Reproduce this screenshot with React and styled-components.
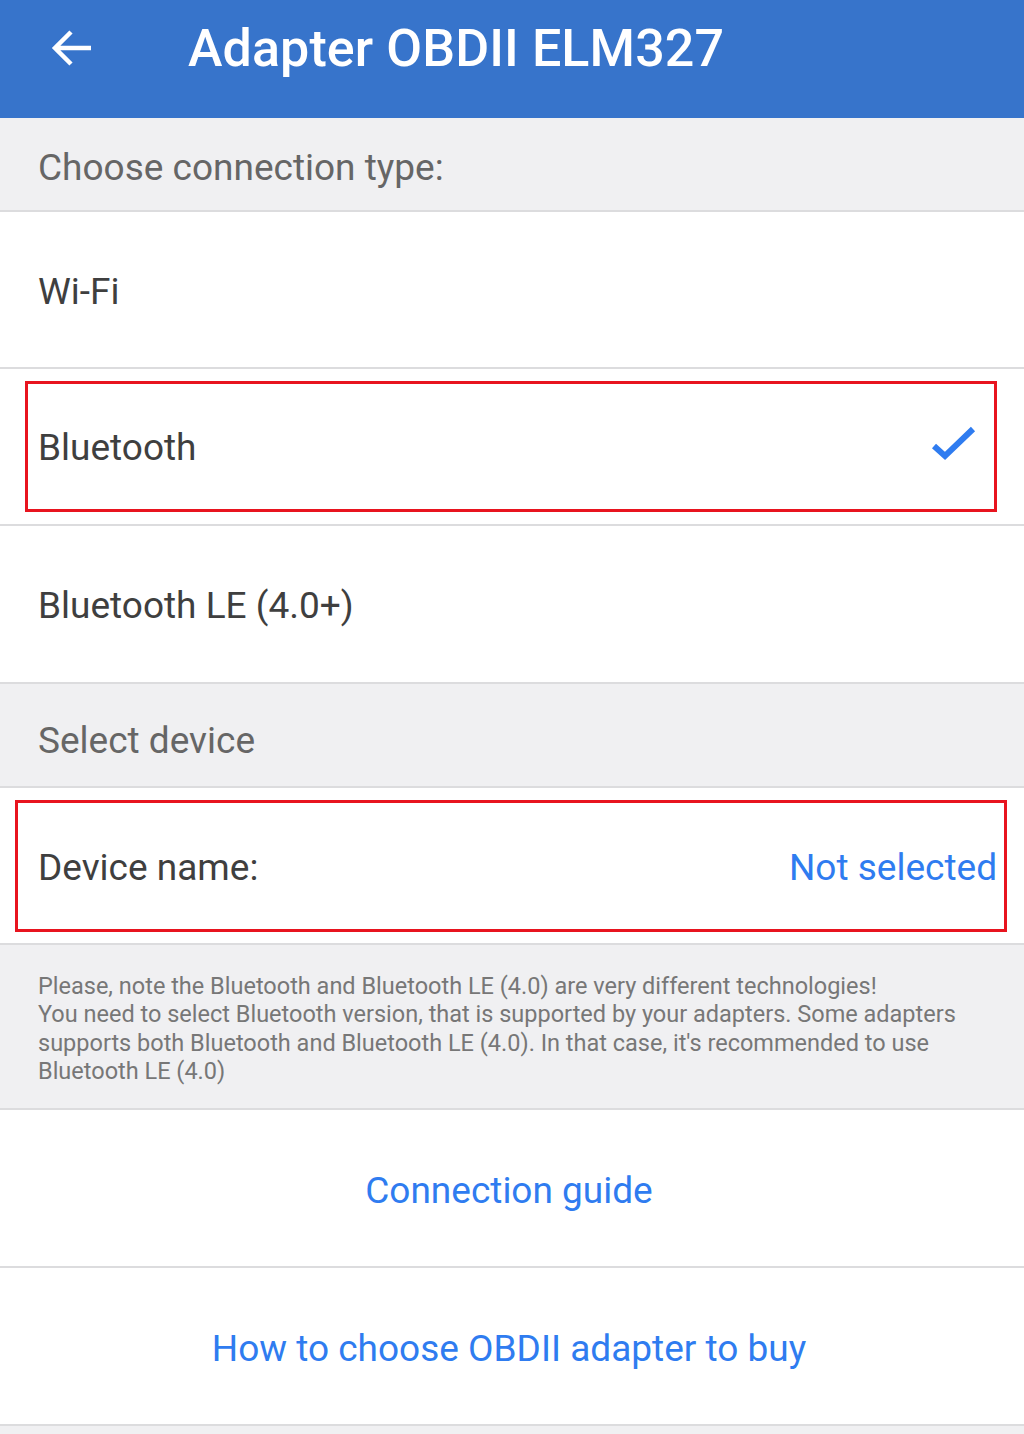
import React from "react";
import styled, { createGlobalStyle } from "styled-components";

const Global = createGlobalStyle`
  html, body { margin: 0; padding: 0; background: #f0f0f2; }
  body { font-family: Roboto, "Noto Sans", "Liberation Sans", sans-serif; }
  * { box-sizing: border-box; }
`;

const Page = styled.div`
  width: 1024px;
  min-height: 1434px;
  background: #f0f0f2;
  display: flex;
  flex-direction: column;
`;

const AppBar = styled.header`
  height: 118px;
  background: #3774cb;
  display: flex;
  align-items: center;
  padding-left: 50px;
  padding-bottom: 22px;
`;

const BackButton = styled.button`
  width: 44px;
  height: 40px;
  padding: 0;
  border: none;
  background: none;
  display: flex;
  align-items: center;
  justify-content: center;
  margin-right: 94px;
`;

const Title = styled.h1`
  margin: 0;
  color: #ffffff;
  font-size: 52px;
  font-weight: 500;
  letter-spacing: 0.1px;
`;

const SectionHeader = styled.div`
  height: ${(p) => p.$h}px;
  flex-shrink: 0;
  display: flex;
  align-items: center;
  padding: ${(p) => p.$pt || 0}px 38px 0;
  color: #666666;
  font-size: 37px;
  border-bottom: 2px solid #dcdcde;
`;

const Row = styled.div`
  height: ${(p) => p.$h || 157}px;
  flex-shrink: 0;
  background: #ffffff;
  border-bottom: 2px solid #dcdcde;
  display: flex;
  align-items: stretch;
  padding: ${(p) => p.$pad || "3px 38px 0"};
`;

const RowInner = styled.div`
  flex: 1;
  display: flex;
  align-items: center;
  justify-content: space-between;
  border: ${(p) => (p.$highlight ? "3px solid #e8141f" : "none")};
  padding: ${(p) => p.$pad || "0"};
`;

const Label = styled.span`
  color: #3f3f3f;
  font-size: 37px;
`;

const Value = styled.span`
  color: #2f7cf0;
  font-size: 37px;
`;

const Note = styled.div`
  flex-shrink: 0;
  background: #f0f0f2;
  border-bottom: 2px solid #dcdcde;
  padding: 27px 38px 0;
  color: #777777;
  font-size: 23.5px;
  line-height: 28.3px;
  height: 165px;
`;

const LinkRow = styled.div`
  height: 158px;
  flex-shrink: 0;
  background: #ffffff;
  border-bottom: 2px solid #dcdcde;
  display: flex;
  align-items: center;
  justify-content: center;
  color: #2f7cf0;
  font-size: 37px;
  padding: 4px 6px 0 0;
`;

const Check = () => (
  <svg width="50" height="44" viewBox="0 0 50 44">
    <path d="M3 20 L14 30 L42 3" fill="none" stroke="#2f7cf0" strokeWidth="6" strokeLinecap="butt" strokeLinejoin="miter" />
  </svg>
);

const Arrow = () => (
  <svg width="42" height="38" viewBox="0 0 42 38">
    <path d="M40 19 H5 M20 3 L4 19 L20 35" fill="none" stroke="#ffffff" strokeWidth="4.5" strokeLinecap="butt" strokeLinejoin="miter" />
  </svg>
);

export default function App() {
  return (
    <>
      <Global />
      <Page>
        <AppBar>
          <BackButton aria-label="Back">
            <Arrow />
          </BackButton>
          <Title>Adapter OBDII ELM327</Title>
        </AppBar>
        <SectionHeader $h={94} $pt={6}>Choose connection type:</SectionHeader>
        <Row>
          <RowInner>
            <Label>Wi-Fi</Label>
          </RowInner>
        </Row>
        <Row $pad="12px 27px 12px 25px">
          <RowInner $highlight $pad="2px 13px 0 10px">
            <Label>Bluetooth</Label>
            <Check />
          </RowInner>
        </Row>
        <Row $h={158}>
          <RowInner>
            <Label>Bluetooth LE (4.0+)</Label>
          </RowInner>
        </Row>
        <SectionHeader $h={104} $pt={10}>Select device</SectionHeader>
        <Row $pad="12px 17px 11px 15px">
          <RowInner $highlight $pad="2px 7px 0 20px">
            <Label>Device name:</Label>
            <Value>Not selected</Value>
          </RowInner>
        </Row>
        <Note>
          Please, note the Bluetooth and Bluetooth LE (4.0) are very different technologies!
          <br />
          You need to select Bluetooth version, that is supported by your adapters. Some adapters supports both Bluetooth and Bluetooth LE (4.0). In that case, it's recommended to use Bluetooth LE (4.0)
        </Note>
        <LinkRow>Connection guide</LinkRow>
        <LinkRow>How to choose OBDII adapter to buy</LinkRow>
      </Page>
    </>
  );
}
